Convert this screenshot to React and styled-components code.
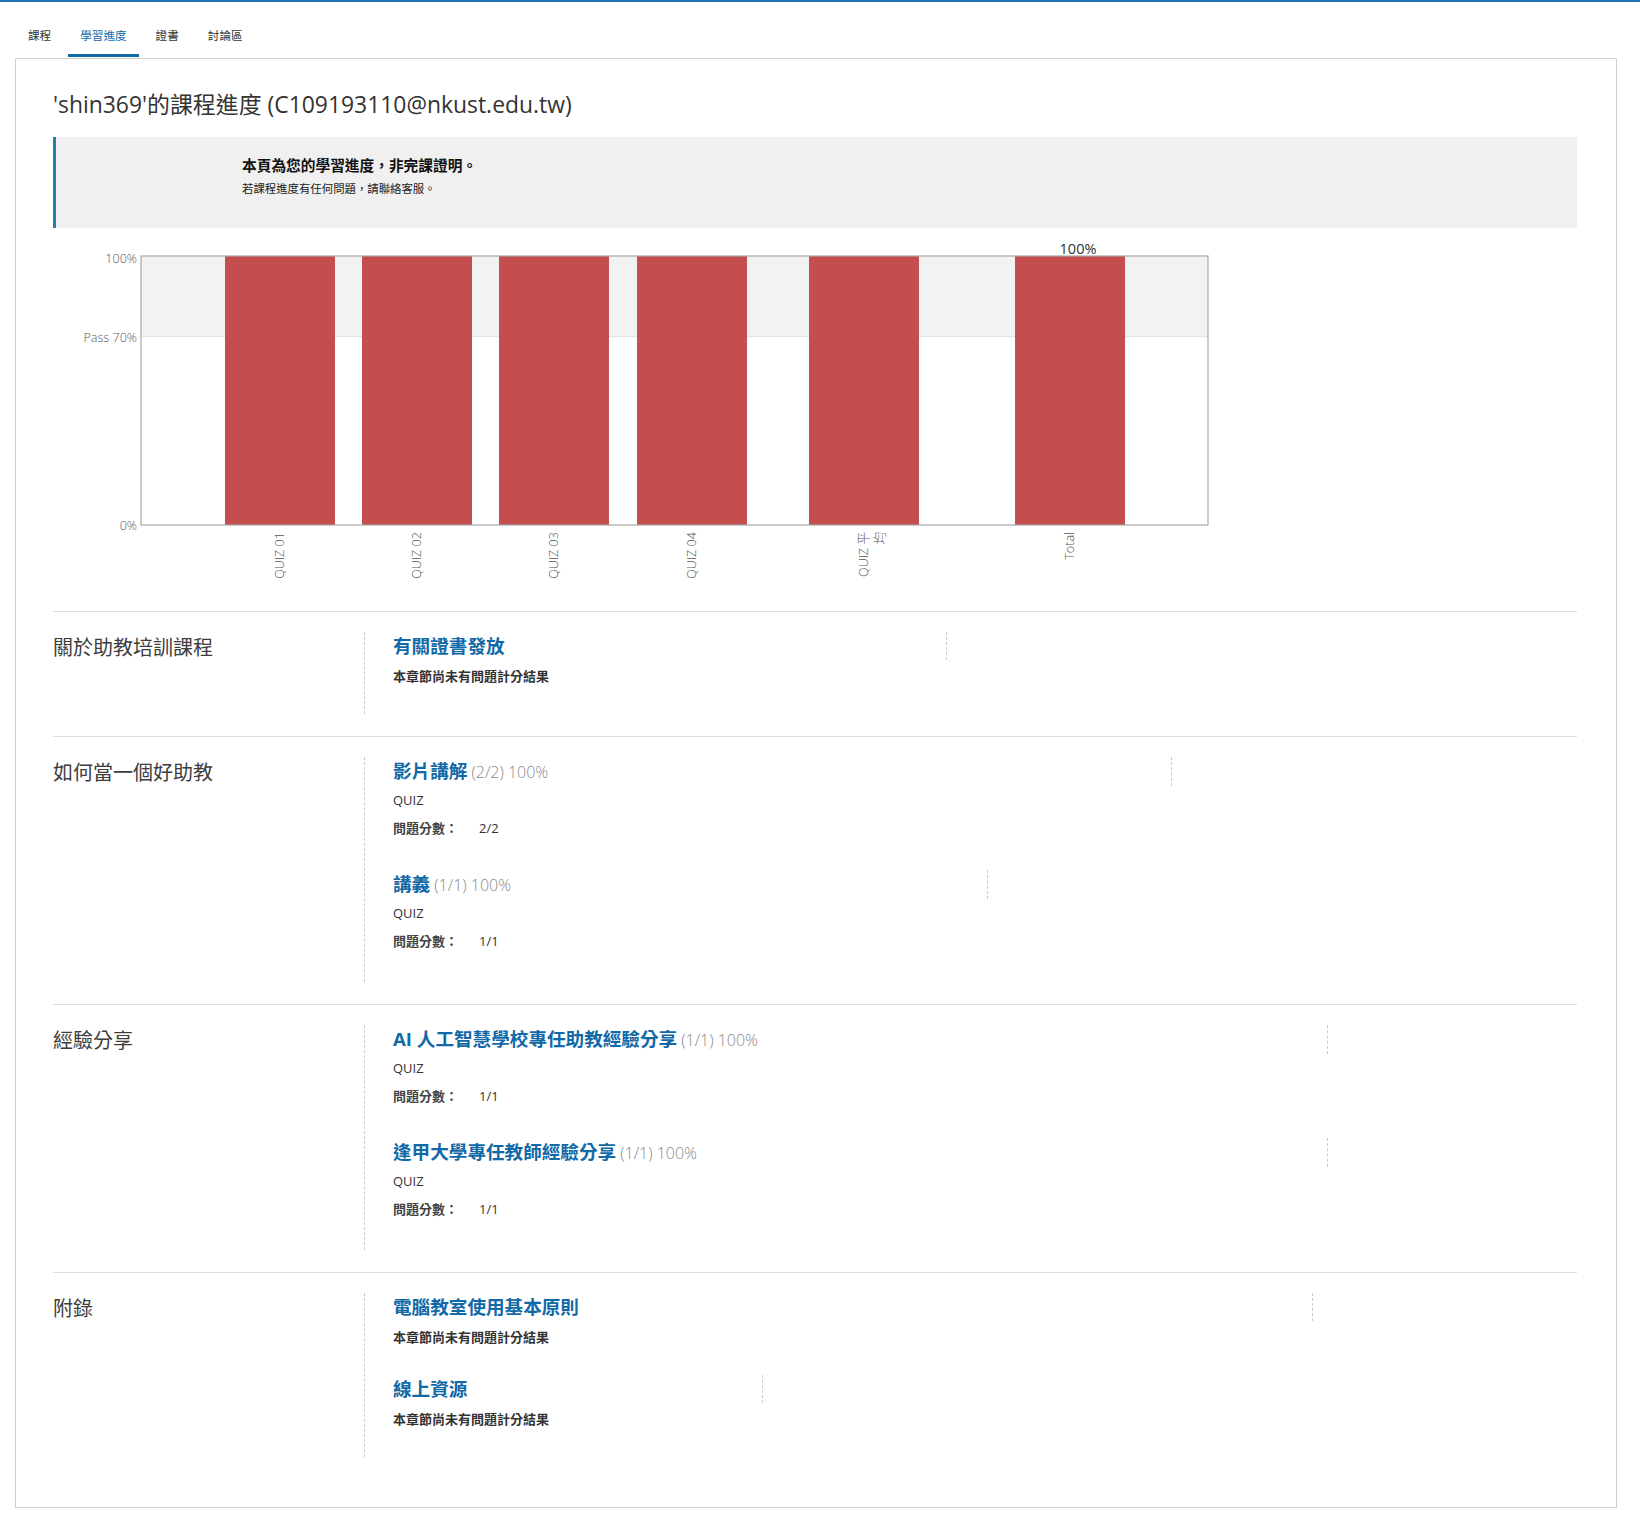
import styled, { createGlobalStyle } from 'styled-components';

const GlobalStyle = createGlobalStyle`
	body {
		margin: 0;
		background: #fff;
		font-family: "Open Sans", "Noto Sans CJK TC", sans-serif;
		color: #333;
	}
`;

const TopLine = styled.div`
	height: 2px;
	background: #1c74b1;
`;

const TabBar = styled.nav`
	display: flex;
	align-items: flex-end;
	gap: 5px;
	height: 56px;
	padding-left: 16px;
`;

const Tab = styled.a`
	display: block;
	padding: 0 12px 10px;
	margin-bottom: 1px;
	font-size: 11.6px;
	line-height: 16px;
	color: ${(p) => (p.$active ? '#1169a8' : '#333')};
	border-bottom: 3px solid ${(p) => (p.$active ? '#1169a8' : 'transparent')};
	text-decoration: none;
`;

const Panel = styled.main`
	margin: 0 23px 0 15px;
	border: 1px solid #cfcfcf;
	padding: 31px 39px 28px 37px;
`;

const PageTitle = styled.h1`
	margin: 0 0 17px;
	font-size: 22.9px;
	line-height: 30px;
	font-weight: 400;
	color: #333;
`;

const Notice = styled.div`
	background: #f0f0f0;
	border-left: 3px solid #2580a8;
	padding: 18px 20px 31px 186px;
`;

const NoticeTitle = styled.div`
	font-size: 14.7px;
	line-height: 20px;
	font-weight: 700;
	color: #111;
`;

const NoticeText = styled.div`
	margin-top: 6px;
	font-size: 11.4px;
	line-height: 16px;
	color: #222;
`;

const ChartSvg = styled.svg`
	display: block;
	width: 100%;
	height: 383px;
`;

const AxisText = styled.text`
	font-family: "Open Sans", "Noto Sans CJK TC", sans-serif;
	font-size: 12.6px;
	font-weight: 300;
	fill: #555;
`;

const ValueText = styled.text`
	font-family: "Open Sans", sans-serif;
	font-size: 14.5px;
	fill: #333;
`;

const Section = styled.section`
	display: flex;
	border-top: 1px solid #ddd;
	padding: 20px 0 22px;
`;

const ChapterTitle = styled.h2`
	flex: 0 0 311px;
	margin: 0;
	padding-top: 2px;
	font-size: 20px;
	line-height: 28px;
	font-weight: 400;
	color: #3d3d3d;
`;

const ChapterBody = styled.div`
	flex: 1;
	border-left: 1px dashed #ccc;
	padding-left: 28px;
`;

const Sub = styled.div`
	padding-bottom: ${(p) => (p.$graded ? '32.5px' : '29px')};
`;

const SubTitle = styled.h3`
	margin: 0;
	width: ${(p) => p.$width}px;
	box-sizing: border-box;
	border-right: 1px dashed #ccc;
	font-size: 18.6px;
	line-height: 28px;
	font-weight: 700;
	color: #1169a8;
`;

const SubScore = styled.span`
	font-family: "Open Sans", sans-serif;
	font-size: 16px;
	font-weight: 300;
	color: #888;
	margin-left: 4px;
`;

const Meta = styled.div`
	margin-top: ${(p) => p.$gap || 5}px;
	font-size: 13px;
	line-height: 18px;
	color: #333;
	font-weight: ${(p) => (p.$bold ? 700 : 400)};
`;

const ScoreLabel = styled.span`
	font-weight: 700;
	color: #444;
	margin-right: 21px;
`;

const bars = [
	{ label: 'QUIZ 01', x: 172 },
	{ label: 'QUIZ 02', x: 309 },
	{ label: 'QUIZ 03', x: 446 },
	{ label: 'QUIZ 04', x: 584 },
	{ label: 'QUIZ 平', extra: '均', x: 756 },
	{ label: 'Total', x: 962, value: '100%' },
];

const sections = [
	{
		title: '關於助教培訓課程',
		subs: [{ name: '有關證書發放', marker: 554 }],
	},
	{
		title: '如何當一個好助教',
		subs: [
			{ name: '影片講解', score: '(2/2) 100%', problem: '2/2', marker: 779 },
			{ name: '講義', score: '(1/1) 100%', problem: '1/1', marker: 595 },
		],
	},
	{
		title: '經驗分享',
		subs: [
			{ name: 'AI 人工智慧學校專任助教經驗分享', score: '(1/1) 100%', problem: '1/1', marker: 935 },
			{ name: '逢甲大學專任教師經驗分享', score: '(1/1) 100%', problem: '1/1', marker: 935 },
		],
	},
	{
		title: '附錄',
		subs: [
			{ name: '電腦教室使用基本原則', marker: 920 },
			{ name: '線上資源', marker: 370 },
		],
	},
];

function Chart() {
	const left = 88, right = 1155, top = 28, bottom = 297;
	const pass = bottom - 0.7 * (bottom - top);
	const barW = 110;
	return (
		<ChartSvg viewBox="0 0 1524 383">
			<rect x={left} y={top} width={right - left} height={pass - top} fill="#f2f2f2" />
			<line x1={left} x2={right} y1={pass} y2={pass} stroke="#dedede" />
			{bars.map((b) => (
				<rect key={b.label} x={b.x} y={top} width={barW} height={bottom - top} fill="#c44d4e" />
			))}
			<rect x={left} y={top} width={right - left} height={bottom - top} fill="none" stroke="#a8a8a8" strokeWidth="1.2" />
			<AxisText x={84} y={top + 2} textAnchor="end" dominantBaseline="central">100%</AxisText>
			<AxisText x={84} y={pass + 1} textAnchor="end" dominantBaseline="central">Pass 70%</AxisText>
			<AxisText x={84} y={bottom} textAnchor="end" dominantBaseline="central">0%</AxisText>
			{bars.map((b) => {
				const cx = b.x + barW / 2;
				return (
					<AxisText key={b.label} transform={`translate(${cx} 304) rotate(-90)`} textAnchor="end">
						<tspan x="0" dy="0.35em">{b.label}</tspan>
						{b.extra && <tspan x="0" dy="1.25em">{b.extra}</tspan>}
					</AxisText>
				);
			})}
			{bars.filter((b) => b.value).map((b) => (
				<ValueText key={b.label} x={b.x + barW / 2 + 8} y={26} textAnchor="middle">{b.value}</ValueText>
			))}
		</ChartSvg>
	);
}

export default function App() {
	return (
		<>
			<GlobalStyle />
			<TopLine />
			<TabBar>
				<Tab>課程</Tab>
				<Tab $active>學習進度</Tab>
				<Tab>證書</Tab>
				<Tab>討論區</Tab>
			</TabBar>
			<Panel>
				<PageTitle>'shin369'的課程進度 (C109193110@nkust.edu.tw)</PageTitle>
				<Notice>
					<NoticeTitle>本頁為您的學習進度，非完課證明。</NoticeTitle>
					<NoticeText>若課程進度有任何問題，請聯絡客服。</NoticeText>
				</Notice>
				<Chart />
				{sections.map((s) => (
					<Section key={s.title}>
						<ChapterTitle>{s.title}</ChapterTitle>
						<ChapterBody>
							{s.subs.map((sub) => (
								<Sub key={sub.name} $graded={!!sub.score}>
									<SubTitle $width={sub.marker}>
										{sub.name}
										{sub.score && <SubScore>{sub.score}</SubScore>}
									</SubTitle>
									{sub.score ? (
										<>
											<Meta>QUIZ</Meta>
											<Meta $gap={10}>
												<ScoreLabel>問題分數：</ScoreLabel>
												{sub.problem}
											</Meta>
										</>
									) : (
										<Meta $gap={7} $bold>本章節尚未有問題計分結果</Meta>
									)}
								</Sub>
							))}
						</ChapterBody>
					</Section>
				))}
			</Panel>
		</>
	);
}
